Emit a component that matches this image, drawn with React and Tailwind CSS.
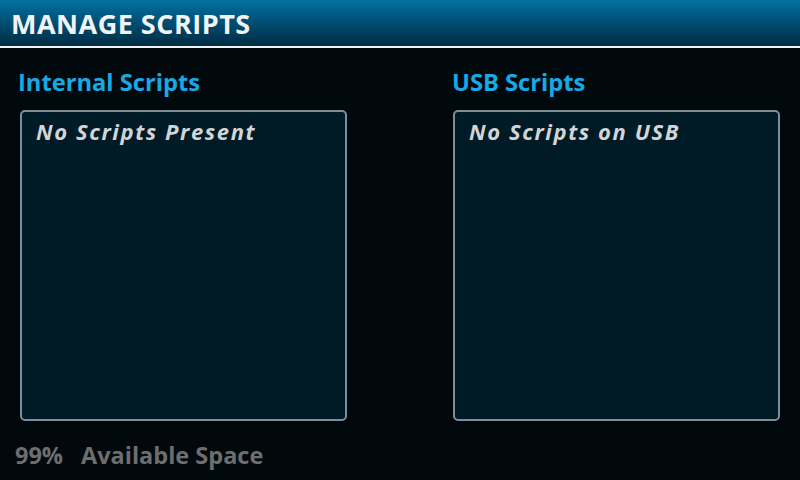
export default function App() {
  const font = { fontFamily: '"Open Sans", "DejaVu Sans", sans-serif' };
  return (
    <div className="w-[800px] h-[480px] bg-[#02090c] flex flex-col overflow-hidden" style={font}>
      <div className="h-[48px] shrink-0 bg-gradient-to-b from-[#0072a3] to-[#002c44] flex items-center pl-[11px] border-b-[2px] border-[#f0f4f6]">
        <span className="text-[#f0f4f6] font-bold text-[27px] leading-none tracking-[0.5px]">MANAGE SCRIPTS</span>
      </div>
      <div className="flex pl-[18px] pt-[20px] gap-[107px]">
        <div className="flex flex-col">
          <div className="text-[#17a9e6] font-bold text-[23.7px] leading-[28px]">Internal Scripts</div>
          <div className="mt-[14px] ml-[2px] w-[327px] h-[311px] bg-[#011b26] border-2 border-[#7f8d96] rounded-[5px] px-[14px] pt-[4px]">
            <div className="text-[#d2d4d6] font-bold italic text-[22px] leading-[30px] tracking-[1.6px]">No Scripts Present</div>
          </div>
        </div>
        <div className="flex flex-col -ml-[2px]">
          <div className="text-[#17a9e6] font-bold text-[23.7px] leading-[28px]">USB Scripts</div>
          <div className="mt-[14px] ml-[1px] w-[327px] h-[311px] bg-[#011b26] border-2 border-[#7f8d96] rounded-[5px] px-[14px] pt-[4px]">
            <div className="text-[#d2d4d6] font-bold italic text-[22px] leading-[30px] tracking-[1.6px]">No Scripts on USB</div>
          </div>
        </div>
      </div>
      <div className="flex pl-[15px] pt-[20px] text-[#6e6e6e] font-bold text-[23.5px] leading-[28px]">
        <span className="w-[66px]">99%</span>
        <span>Available Space</span>
      </div>
    </div>
  );
}
